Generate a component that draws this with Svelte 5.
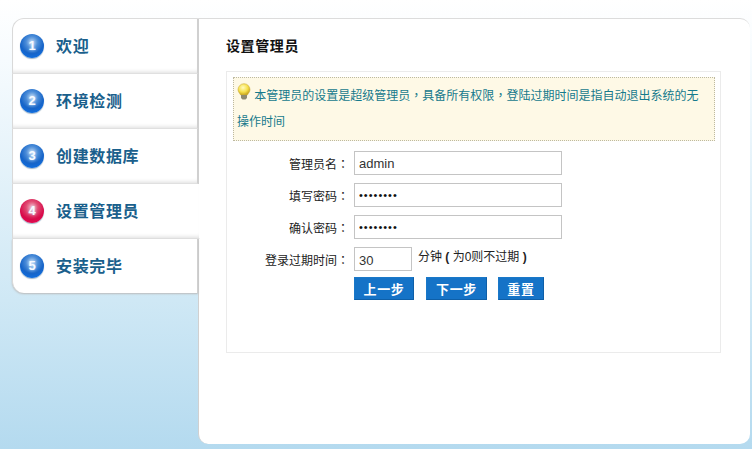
<script>
  const steps = [
    { n: 1, label: '欢迎' },
    { n: 2, label: '环境检测' },
    { n: 3, label: '创建数据库' },
    { n: 4, label: '设置管理员', active: true },
    { n: 5, label: '安装完毕' }
  ];
</script>

<div class="page">
  <nav class="side">
    {#each steps as s}
      <div class="step" class:active={s.active}>
        <span class="ball">{s.n}</span>
        <span class="name">{s.label}</span>
      </div>
    {/each}
  </nav>
  <main class="main">
    <h1>设置管理员</h1>
    <section class="box">
      <div class="notice">
        <svg class="bulb" width="14" height="17" viewBox="0 0 14 17" aria-hidden="true">
          <defs>
            <radialGradient id="b" cx="0.42" cy="0.35" r="0.65">
              <stop offset="0" stop-color="#fffbc0" />
              <stop offset="0.6" stop-color="#f6e04a" />
              <stop offset="1" stop-color="#c9a51c" />
            </radialGradient>
          </defs>
          <path d="M7 .7a6 6 0 0 1 6 6c0 2.300-1.700 3.300-2.600 5.300H3.600C2.700 10 1 9 1 6.700a6 6 0 0 1 6-6z" fill="url(#b)" stroke="#cdb040" stroke-width=".6" />
          <path d="M4 12h6v3l-1.500 1.500h-3L4 15z" fill="#8f8a70" />
        </svg>
        本管理员的设置是超级管理员<span class="p">，</span>具备所有权限<span class="p">，</span>登陆过期时间是指自动退出系统的无<br />操作时间
      </div>
      <form class="form" onsubmit={(e) => e.preventDefault()}>
        <label for="u">管理员名<span class="p">：</span></label>
        <input id="u" class="text" value="admin" />
        <label for="p">填写密码<span class="p">：</span></label>
        <input id="p" class="text pw" type="password" value="admin123" />
        <label for="c">确认密码<span class="p">：</span></label>
        <input id="c" class="text pw" type="password" value="admin123" />
        <label for="t">登录过期时间<span class="p">：</span></label>
        <div class="time">
          <input id="t" class="text short" value="30" />
          <span class="hint">分钟 <b>(</b> 为0则不过期 <b>)</b></span>
        </div>
        <div class="buttons">
          <button type="button" class="b1">上一步</button>
          <button type="button" class="b2">下一步</button>
          <button type="reset" class="b3">重置</button>
        </div>
      </form>
    </section>
  </main>
</div>

<style>
  :global(body) {
    margin: 0;
    background: #fff;
  }
  .page {
    box-sizing: border-box;
    width: 752px;
    height: 449px;
    overflow: hidden;
    display: flex;
    align-items: flex-start;
    padding: 18px 2px 0 12px;
    font-family: "Liberation Sans", "Noto Sans CJK SC", sans-serif;
    background: linear-gradient(to bottom, #ffffff 0, #f6fbfe 60px, #cfe8f5 300px, #b4daef 449px);
  }
  .side {
    width: 186px;
    flex: none;
    display: flex;
    flex-direction: column;
    position: relative;
    z-index: 1;
  }
  .step {
    box-sizing: border-box;
    height: 55px;
    display: flex;
    align-items: center;
    gap: 12px;
    padding-left: 7px;
    background: #fff;
    border-left: 1px solid #d9d9d9;
    border-right: 1px solid #d0d0d0;
    border-bottom: 1px solid #e0e0e0;
    box-shadow: inset 0 -4px 4px -3px #ddd;
  }
  .step:first-child {
    height: 56px;
    border-top: 1px solid #dcdcdc;
    border-top-left-radius: 12px;
  }
  .step:last-child {
    height: 54px;
    border-bottom-left-radius: 12px;
    box-shadow: 0 1px 2px #bbb;
    border-bottom: none;
  }
  .step.active {
    border-right: 1px solid #fff;
    margin-right: -2px;
    width: 188px;
    box-shadow: inset 0 -4px 4px -3px #ddd;
  }
  .ball {
    width: 24px;
    height: 24px;
    flex: none;
    border-radius: 50%;
    display: flex;
    align-items: center;
    justify-content: center;
    margin-top: -1px;
    color: #f6faff;
    font-size: 13px;
    font-weight: bold;
    text-shadow: 0 0 3px #d0e8ff;
    background: radial-gradient(circle at 50% 34%, #b4d0f0 0, #4a8cd8 30%, #1664c8 58%, #0f6ee0 82%, #3f96f0 100%);
    box-shadow: 0 1px 1px #9db4c8;
  }
  .active .ball {
    background: radial-gradient(circle at 50% 34%, #f4b4c6 0, #e04a72 30%, #d80a4a 62%, #e00a50 82%, #ee5080 100%);
  }
  .name {
    font-size: 16px;
    font-weight: bold;
    letter-spacing: 0.65px;
    color: #1a5f8c;
    margin-top: -2px;
  }
  .main {
    box-sizing: border-box;
    flex: 1;
    height: 426px;
    background: #fff;
    border: 1px solid #dcdcdc;
    border-left-color: #d0d0d0;
    border-width: 1px 0 0 1px;
    border-radius: 0 10px 10px 10px;
    padding: 18px 29px 0 27px;
  }
  h1 {
    margin: 0 0 16px;
    font-size: 14px;
    line-height: 18px;
    font-weight: bold;
    color: #111;
    letter-spacing: 0.6px;
  }
  .box {
    box-sizing: border-box;
    height: 282px;
    border: 1px solid #ebebeb;
    padding: 5px 5px 0 6px;
  }
  .notice {
    box-sizing: border-box;
    height: 64px;
    border: 1px dotted #bdb9a0;
    background: #fef9e6;
    padding: 5px 3px 0 3px;
    font-size: 12px;
    line-height: 26px;
    color: #167a8c;
  }
  .p {
    font-family: "Noto Sans CJK TC", sans-serif;
    line-height: 1;
  }
  .bulb {
    vertical-align: -3px;
    position: relative;
    top: -3px;
  }
  .form {
    display: grid;
    grid-template-columns: 116px 1fr;
    column-gap: 5px;
    row-gap: 8px;
    margin-top: 10px;
    align-items: center;
  }
  label {
    text-align: right;
    font-size: 12px;
    color: #222;
  }
  .text {
    box-sizing: border-box;
    width: 208px;
    height: 24px;
    border: 1px solid #c4c4c4;
    background: #fff;
    padding: 0 4px;
    margin: 0;
    font-family: "Liberation Sans", sans-serif;
    font-size: 13px;
    color: #333;
    outline: none;
  }
  .pw {
    color: #111;
    font-size: 11px;
    letter-spacing: 1px;
  }
  .short {
    width: 58px;
    padding-top: 2px;
  }
  .time {
    display: flex;
    align-items: flex-start;
    gap: 6px;
  }
  .hint {
    font-size: 12px;
    line-height: 18px;
    margin-top: 1px;
    color: #222;
  }
  .buttons {
    grid-column: 2;
    display: flex;
    gap: 12px;
    margin-top: -2px;
  }
  button {
    box-sizing: border-box;
    height: 23px;
    padding: 0;
    border: 1px solid #0e64b4;
    border-color: #1a78c8 #0e5fa8 #0e5fa8 #1a78c8;
    background: #1573c7;
    color: #fff;
    font-family: inherit;
    font-size: 13px;
    letter-spacing: 0.7px;
    font-weight: bold;
  }
  .b1 { width: 60px; }
  .b2 { width: 61px; margin-right: -1px; }
  .b3 { width: 46px; }
</style>
